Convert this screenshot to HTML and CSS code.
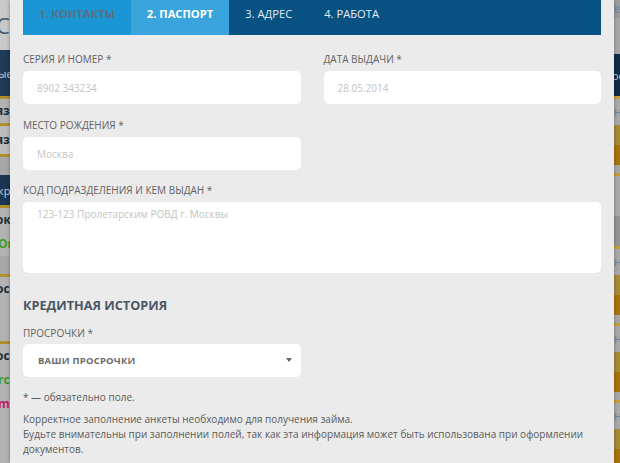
FILE: index.html
```html
<!DOCTYPE html>
<html lang="ru">
<head>
<meta charset="utf-8">
<title>Анкета — Паспорт</title>
<link rel="stylesheet" href="styles.css">
</head>
<body>
<div class="page">
  <div class="strip strip-left">
    <div class="band b-light"><span class="peek peek-c">С</span></div>
    <div class="band b-navy"><span class="peek peek-w">ые</span></div>
    <div class="band b-line"></div>
    <div class="band b-gray1"><span class="peek peek-d">яз</span></div>
    <div class="band b-line"></div>
    <div class="band b-gray2"><span class="peek peek-d">яз</span></div>
    <div class="band b-line"></div>
    <div class="band b-gray3"></div>
    <div class="band b-navy2"><span class="peek peek-w">кр</span></div>
    <div class="band b-line"></div>
    <div class="band b-gray1"><span class="peek peek-d">ок</span></div>
    <div class="band b-gray1"><span class="peek peek-g">Or</span></div>
    <div class="band b-gray3"></div>
    <div class="band b-line"></div>
    <div class="band b-gray1"><span class="peek peek-d">ос</span></div>
    <div class="band b-gray1 b-tall"></div>
    <div class="band b-line"></div>
    <div class="band b-gray1"><span class="peek peek-d">ос</span></div>
    <div class="band b-gray1"><span class="peek peek-g">rc</span></div>
    <div class="band b-gray1"><span class="peek peek-p">m</span></div>
    <div class="band b-rest"></div>
  </div>

  <div class="modal">
    <nav class="tabs">
      <div class="tab tab-done">1. КОНТАКТЫ</div>
      <div class="tab tab-active">2. ПАСПОРТ</div>
      <div class="tab">3. АДРЕС</div>
      <div class="tab">4. РАБОТА</div>
    </nav>

    <form class="form">
      <div class="row">
        <div class="field">
          <label class="label">Серия и номер *</label>
          <input class="input" type="text" placeholder="8902 343234">
        </div>
        <div class="field">
          <label class="label">Дата выдачи *</label>
          <input class="input" type="text" placeholder="28.05.2014">
        </div>
      </div>
      <div class="row">
        <div class="field">
          <label class="label">Место рождения *</label>
          <input class="input" type="text" placeholder="Москва">
        </div>
        <div class="field"></div>
      </div>
      <div class="field field-wide">
        <label class="label">Код подразделения и кем выдан *</label>
        <textarea class="input textarea" placeholder="123-123 Пролетарским РОВД г. Москвы"></textarea>
      </div>

      <h2 class="section-title">Кредитная история</h2>
      <div class="row">
        <div class="field field-last">
          <label class="label label-tight">Просрочки *</label>
          <div class="select">
            <span class="select-text">Ваши просрочки</span>
            <span class="select-arrow"></span>
          </div>
        </div>
        <div class="field field-last"></div>
      </div>

      <p class="note">* — обязательно поле.</p>
      <p class="info">Корректное заполнение анкеты необходимо для получения займа.<br>Будьте внимательны при заполнении полей, так как эта информация может быть использована при оформлении документов.</p>
    </form>
  </div>

  <div class="strip strip-right">
    <div class="band r-gray"><span class="peek peek-b">е</span></div>
    <div class="band r-gray2"></div>
    <div class="band r-navy"><span class="peek peek-w">ос</span></div>
    <div class="band r-yel"></div>
    <div class="band r-gray3"><span class="peek peek-b">н</span></div>
    <div class="band r-gold"></div>
    <div class="band r-orange"></div>
    <div class="band r-gray2 r-s"></div>
    <div class="band r-yel"></div>
    <div class="band r-gray3 r-m"></div>
    <div class="band r-gray4"></div>
    <div class="band r-yel"></div>
    <div class="band r-gray3"><span class="peek peek-b">н</span></div>
    <div class="band r-gold"></div>
    <div class="band r-orange"></div>
    <div class="band r-gray2 r-s"></div>
    <div class="band r-yel"></div>
    <div class="band r-gray3"><span class="peek peek-b">н</span></div>
    <div class="band r-gold"></div>
    <div class="band r-orange"></div>
    <div class="band r-gray2 r-s"></div>
    <div class="band r-yel"></div>
    <div class="band r-gray3"><span class="peek peek-b">н</span></div>
    <div class="band r-gold"></div>
    <div class="band r-orange r-rest"></div>
  </div>
</div>
</body>
</html>
```

FILE: styles.css
```css
* { box-sizing: border-box; }

html, body {
  margin: 0;
  padding: 0;
  width: 620px;
  height: 463px;
  overflow: hidden;
  background: #9a9a9a;
  font-family: "Open Sans", "Liberation Sans", sans-serif;
}

.page {
  display: flex;
  width: 620px;
  height: 463px;
}

/* dimmed page behind the modal */
.strip {
  display: flex;
  flex-direction: column;
  overflow: hidden;
  flex-shrink: 0;
}
.strip-left { width: 10px; background: #a9a9a9; }
.strip-right { width: 6px; background: #a3a3a3; }

.band {
  flex-shrink: 0;
  overflow: hidden;
  white-space: nowrap;
  font-size: 12px;
  font-weight: 700;
  line-height: 1;
  display: flex;
  align-items: center;
}
.peek { display: block; }
.peek-c { font-size: 22px; font-weight: 400; color: #47596a; margin-left: -4px; }
.peek-w { color: #c8d2dc; font-weight: 400; font-size: 11px; margin-left: -2px; }
.peek-d { color: #1e2b36; margin-left: -4px; }
.peek-g { color: #3c9a22; margin-left: -2px; }
.peek-p { color: #c21a6a; margin-left: -2px; }
.peek-b { color: #6c8aa6; font-weight: 400; margin-left: 0; }

.b-light { height: 50px; background: #c9c9c9; }
.b-navy { height: 46px; background: #1f3a57; }
.b-line { height: 3px; background: #b08f2a; }
.b-gray1 { height: 24px; background: #b3b3b3; }
.b-gray2 { height: 28px; background: #bcbcbc; }
.b-gray3 { height: 18px; background: #a7a7a7; }
.b-navy2 { height: 30px; background: #1a3654; }
.b-tall { height: 40px; }
.b-rest { flex: 1; background: #b3b3b3; }

.r-gray { height: 18px; background: #9c9c9c; }
.r-gray2 { height: 36px; background: #a8a8a8; }
.r-navy { height: 42px; background: #0f2b47; }
.r-yel { height: 3px; background: #c6a035; }
.r-gray3 { height: 26px; background: #a9a9a9; }
.r-gray4 { height: 30px; background: #959595; }
.r-gold { height: 20px; background: #a98a3a; }
.r-orange { height: 20px; background: #a87610; }
.r-s { height: 8px; }
.r-m { height: 40px; }
.r-rest { flex: 1; }

/* modal */
.modal {
  width: 604px;
  flex-shrink: 0;
  background: #ebebeb;
  padding: 0 13px;
  box-shadow: 0 0 4px rgba(0, 0, 0, 0.35);
  position: relative;
  z-index: 1;
}

.tabs {
  display: flex;
  height: 35px;
  background: #075283;
}
.tab {
  padding: 5px 16px 0;
  font-size: 11.2px;
  line-height: 17px;
  color: #e4edf4;
  font-weight: 400;
  white-space: nowrap;
}
.tab-done {
  background: #1a96d4;
  color: #5d6f7e;
  font-weight: 700;
}
.tab-active {
  background: #3aa4dc;
  color: #ffffff;
  font-weight: 700;
}

.form {
  padding-top: 17px;
}

.row {
  display: flex;
  gap: 23px;
}
.field {
  flex: 1;
  display: flex;
  flex-direction: column;
  margin-bottom: 14px;
}
.row + .row .field { margin-bottom: 13px; }
.field-wide { margin-bottom: 0; }
.field-last { margin-bottom: 0; }

.label {
  font-size: 10px;
  line-height: 15px;
  text-transform: uppercase;
  color: #626262;
  margin-bottom: 4px;
}
.label-tight { margin-bottom: 3px; }

.input {
  display: block;
  width: 100%;
  height: 33px;
  border: none;
  border-radius: 5px;
  background: #ffffff;
  padding: 0 14px;
  font-family: inherit;
  font-size: 10px;
  color: #555;
  outline: none;
}
.input::placeholder { color: #c4c4c4; opacity: 1; }

.textarea {
  height: 71px;
  padding: 4px 14px;
  resize: none;
  line-height: 16px;
}

.section-title {
  margin: 22px 0 11px;
  font-size: 12.7px;
  line-height: 20px;
  font-weight: 700;
  text-transform: uppercase;
  color: #4a5664;
}

.select {
  height: 33px;
  border-radius: 5px;
  background: #ffffff;
  display: flex;
  align-items: center;
  justify-content: space-between;
  padding: 0 9px 0 15px;
}
.select-text {
  font-size: 9.5px;
  font-weight: 700;
  text-transform: uppercase;
  color: #6a6a6a;
  letter-spacing: 0.2px;
}
.select-arrow {
  width: 0;
  height: 0;
  border-left: 3px solid transparent;
  border-right: 3px solid transparent;
  border-top: 4px solid #666;
  margin-top: -2px;
}

.note {
  margin: 13px 0 7px;
  font-size: 10px;
  line-height: 15px;
  color: #5a5a5a;
}
.info {
  margin: 0;
  font-size: 10px;
  line-height: 15px;
  color: #5a5a5a;
}
```
